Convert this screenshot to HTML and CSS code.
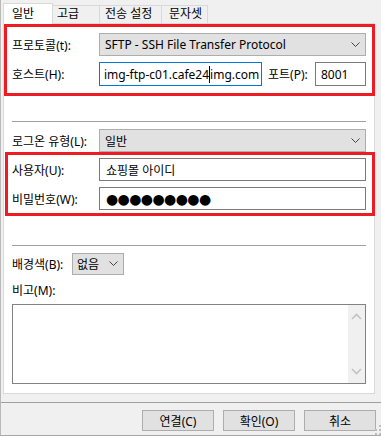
FILE: index.html
```html
<!DOCTYPE html>
<html lang="ko">
<head>
<meta charset="utf-8">
<link rel="stylesheet" href="styles.css">
</head>
<body>
<div class="dlg">
  <div class="tabs">
    <div class="tab active t1">일반</div>
    <div class="tab t2">고급</div>
    <div class="tab t3">전송 설정</div>
    <div class="tab t4">문자셋</div>
  </div>
  <div class="panel">
    <div class="row r-proto">
      <span class="lbl">프로토콜(t):</span>
      <div class="combo wide"><span class="val">SFTP - SSH File Transfer Protocol</span>
        <svg class="chev" width="9" height="6" viewBox="0 0 9 6"><polyline points="0.5,0.5 4.5,4.5 8.5,0.5" fill="none" stroke="#444" stroke-width="1"/></svg>
      </div>
    </div>
    <div class="row r-host">
      <span class="lbl">호스트(H):</span>
      <div class="field host focus">img-ftp-c01.cafe24<span class="caret"></span>img.com</div>
      <span class="lbl port-lbl">포트(P):</span>
      <div class="field port">8001</div>
    </div>
    <div class="sep sep1"></div>
    <div class="row r-login">
      <span class="lbl">로그온 유형(L):</span>
      <div class="combo wide"><span class="val">일반</span>
        <svg class="chev" width="9" height="6" viewBox="0 0 9 6"><polyline points="0.5,0.5 4.5,4.5 8.5,0.5" fill="none" stroke="#444" stroke-width="1"/></svg>
      </div>
    </div>
    <div class="row r-user">
      <span class="lbl">사용자(U):</span>
      <div class="field wide">쇼핑몰 아이디</div>
    </div>
    <div class="row r-pass">
      <span class="lbl">비밀번호(W):</span>
      <div class="field wide pw">●●●●●●●●●</div>
    </div>
    <div class="sep sep2"></div>
    <div class="row r-bg">
      <span class="lbl bg-lbl">배경색(B):</span>
      <div class="combo small"><span class="val">없음</span>
        <svg class="chev" width="9" height="6" viewBox="0 0 9 6"><polyline points="0.5,0.5 4.5,4.5 8.5,0.5" fill="none" stroke="#444" stroke-width="1"/></svg>
      </div>
    </div>
    <div class="memo-lbl">비고(M):</div>
    <div class="memo">
      <div class="vscroll">
        <svg width="11" height="7" viewBox="0 0 11 7"><polyline points="1,6 5.5,1.5 10,6" fill="none" stroke="#c2c2c2" stroke-width="1.6"/></svg>
        <svg width="11" height="7" viewBox="0 0 11 7"><polyline points="1,1 5.5,5.5 10,1" fill="none" stroke="#c2c2c2" stroke-width="1.6"/></svg>
      </div>
    </div>
  </div>
  <div class="footer">
    <div class="btns">
      <div class="btn">연결(C)</div>
      <div class="btn">확인(O)</div>
      <div class="btn">취소</div>
    </div>
  </div>
  <div class="mark m1"></div>
  <div class="mark m2"></div>
  <svg class="grip" width="6" height="10" viewBox="0 0 6 10">
    <rect x="4" y="0" width="2" height="2" fill="#bcbcbc"/>
    <rect x="4" y="4" width="2" height="2" fill="#bcbcbc"/>
    <rect x="0" y="4" width="2" height="2" fill="#bcbcbc"/>
    <rect x="4" y="8" width="2" height="2" fill="#bcbcbc"/>
    <rect x="0" y="8" width="2" height="2" fill="#bcbcbc"/>
  </svg>
</div>
</body>
</html>
```
FILE: styles.css
```css
* { box-sizing: border-box; }
html, body { margin: 0; padding: 0; }
body {
  width: 381px;
  height: 436px;
  overflow: hidden;
  background: #f0f0f0;
  font-family: "Noto Sans", "Noto Sans CJK KR", sans-serif;
  font-size: 12px;
  color: #000;
}
.dlg {
  position: relative;
  width: 381px;
  height: 436px;
  border-left: 1px solid #b9b9b9;
  border-bottom: 1px solid #a8a8a8;
}
.tabs {
  display: flex;
  align-items: flex-end;
  height: 23px;
  padding-left: 2px;
  position: relative;
  z-index: 2;
}
.tab {
  height: 18px;
  border: 1px solid #d9d9d9;
  border-bottom: none;
  background: #f0f0f0;
  line-height: 16px;
  white-space: nowrap;
}
.tab.active {
  height: 21px;
  margin-bottom: -1px;
  background: #fff;
  line-height: 19px;
}
.t1 { width: 50px; padding-left: 8px; }
.t2 { width: 47px; padding-left: 4px; border-left: none; }
.t3 { width: 62px; padding-left: 5px; border-left: none; }
.t4 { width: 46px; padding-left: 7px; border-left: none; }

.panel {
  margin-left: 2px;
  width: 372px;
  height: 371px;
  background: #fff;
  border: 1px solid #d9d9d9;
  padding: 0 8px 9px 8px;
  display: flex;
  flex-direction: column;
}
.row {
  display: flex;
  align-items: center;
  flex: none;
}
.lbl {
  width: 87px;
  flex: none;
  white-space: nowrap;
}
.combo {
  position: relative;
  height: 23px;
  background: #e1e1e1;
  border: 1px solid #adadad;
  padding-left: 5px;
  display: flex;
  align-items: center;
}
.combo.wide { width: 268px; }
.combo .chev {
  position: absolute;
  right: 5px;
  top: 8px;
}
.field {
  height: 23px;
  border: 1px solid #7a7a7a;
  background: #fff;
  padding-left: 6px;
  display: flex;
  align-items: center;
  white-space: nowrap;
}
.field.wide { width: 268px; }
.field.focus { border-color: #0078d7; }
.r-proto { margin-top: 9px; height: 23px; }
.r-host { margin-top: 6px; height: 24px; }
.r-host .field { height: 24px; }
.host { width: 163px; padding-left: 4px; overflow: hidden; }
.caret {
  display: inline-block;
  width: 1px;
  height: 17px;
  background: #000;
}
.port-lbl { width: auto; margin-left: 6px; }
.port { width: 51px; margin-left: auto; padding-left: 5px; }
.sep {
  height: 1px;
  background: #a0a0a0;
  flex: none;
}
.sep1 { margin-top: 35px; }
.r-login { margin-top: 7px; height: 23px; }
.r-user { margin-top: 6px; height: 23px; }
.r-pass { margin-top: 6px; height: 23px; }
.pw {
  font-family: "DejaVu Sans", sans-serif;
  font-size: 14px;
  letter-spacing: -0.6px;
  padding-left: 6px;
}
.sep2 { margin-top: 35px; }
.r-bg { margin-top: 7px; height: 22px; }
.bg-lbl { width: 60px; }
.combo.small { width: 52px; height: 22px; padding-left: 4px; }
.combo.small .chev { top: 7px; right: 5px; }
.memo-lbl { margin-top: 8px; height: 16px; line-height: 16px; flex: none; }
.memo {
  margin-top: 5px;
  height: 80px;
  flex: none;
  border: 1px solid #828282;
  background: #fff;
  display: flex;
  justify-content: flex-end;
}
.vscroll {
  width: 17px;
  background: #f0f0f0;
  display: flex;
  flex-direction: column;
  justify-content: space-between;
  align-items: center;
  padding: 8px 0 8px 0;
}
.footer {
  margin-top: 8px;
  border-top: 1px solid #a0a0a0;
  padding-top: 7px;
}
.btns {
  display: flex;
  justify-content: flex-end;
  gap: 9px;
  padding-right: 5px;
}
.btn {
  width: 72px;
  height: 21px;
  background: #e1e1e1;
  border: 1px solid #adadad;
  display: flex;
  align-items: center;
  justify-content: center;
}
.mark {
  position: absolute;
  border: 3px solid #ed1c24;
  z-index: 5;
}
.m1 { left: 3px; top: 24px; width: 371px; height: 72px; }
.m2 { left: 4px; top: 152px; width: 370px; height: 64px; }
.grip { position: absolute; right: 0; bottom: 0; }
```
